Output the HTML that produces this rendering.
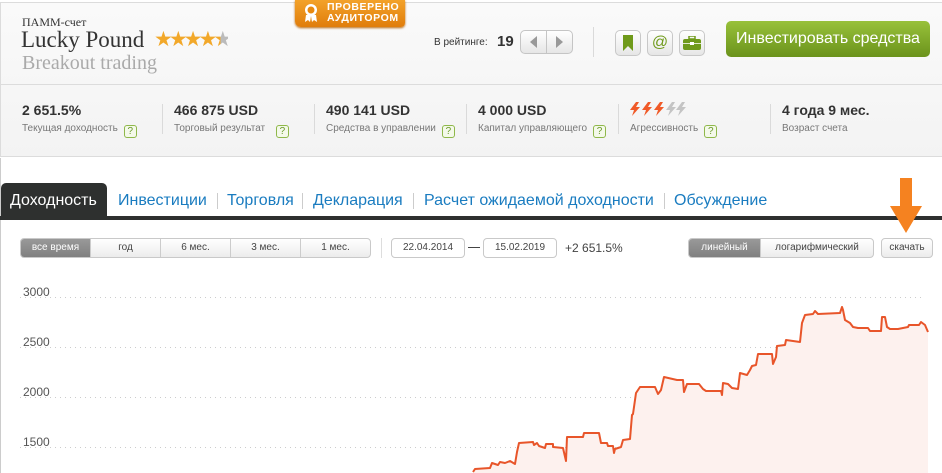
<!DOCTYPE html>
<html><head><meta charset="utf-8"><style>
*{margin:0;padding:0;box-sizing:border-box}
body{width:942px;height:473px;overflow:hidden;background:#fff;font-family:"Liberation Sans",Arial,sans-serif;position:relative;color:#333}
.abs{position:absolute}
.panel{left:0;top:2px;width:942px;height:155px;background:linear-gradient(#fafafa,#f3f3f3);border:1px solid #dcdcdc;border-right:none}
.hdiv{left:1px;top:84px;width:941px;height:1px;background:#dcdcdc}
.serif{font-family:"Liberation Serif",serif}
.stat b{font-size:14px;color:#333;display:block}
.stat span{font-size:10px;color:#777}
.q{display:inline-block;width:13px;height:13px;border:1px solid #8fb84a;border-radius:3px;color:#6a9a2a;font-size:10px;line-height:11px;text-align:center;font-style:normal;margin-left:6px;vertical-align:-3px;background:#f4f9ea}
.vs{width:1px;height:30px;background:#dadada;top:104px}
.ib{width:26px;height:26px;top:30px;border:1px solid #c8c8c8;border-radius:5px;background:linear-gradient(#fff,#e6e6e6)}
.tab{top:192px;font-size:16px;color:#1a7cc0}
.sep{top:193px;width:1px;height:16px;background:#ccc}
.seg{top:238px;height:20px;border:1px solid #c9c9c9;border-radius:4px;background:linear-gradient(#fff,#ececec);font-size:10px;color:#444;display:flex;overflow:hidden}
.seg div{text-align:center;line-height:18px;border-right:1px solid #ccc}
.seg div:last-child{border-right:none}
.seg .on{background:linear-gradient(#999,#808080);color:#fff}
.inp{top:238px;height:20px;border:1px solid #c9c9c9;border-radius:4px;font-size:10px;line-height:18px;text-align:center;color:#444;background:#fff}
.yl{font-size:12px;color:#555;left:23px}
</style></head><body>
<div class="abs panel"></div>
<div class="abs hdiv"></div>
<div class="abs" style="left:0;top:158px;width:1px;height:315px;background:#ccc"></div>
<div class="abs" style="left:295px;top:0;width:110px;height:27px;background:linear-gradient(#f3a22a,#e07d0b);border-radius:0 0 4px 6px;box-shadow:0 1px 2px #b96a10"></div>
<svg class="abs" style="left:303px;top:3px" width="16" height="20" viewBox="0 0 16 20"><circle cx="8" cy="7" r="6" fill="#fff"/><circle cx="8" cy="7" r="3.5" fill="#e8890f"/><path d="M3 12 L2 19 L5 17 L7 19 L8 13 L9 19 L11 17 L14 19 L13 12Z" fill="#fff"/></svg>
<div class="abs" style="left:327px;top:2px;font-size:10.5px;line-height:11px;font-weight:bold;color:#fff;letter-spacing:0.6px">ПРОВЕРЕНО<br>АУДИТОРОМ</div>
<div class="abs serif" style="left:22px;top:15px;font-size:12px;color:#333">ПАММ-счет</div>
<div class="abs serif" style="left:21px;top:27px;font-size:23px;color:#333">Lucky Pound</div>
<div class="abs" style="left:154px;top:27px;font-size:21px;letter-spacing:-4px;color:#f2a82a">★★★★<span style="background:linear-gradient(90deg,#f2a82a 50%,#bbb 50%);-webkit-background-clip:text;color:transparent">★</span></div>
<div class="abs serif" style="left:22px;top:52px;font-size:20px;color:#aaa">Breakout trading</div>
<div class="abs" style="left:434px;top:37px;font-size:10px;color:#333">В рейтинге:</div>
<div class="abs" style="left:497px;top:33px;font-size:15px;font-weight:bold;color:#333">19</div>
<div class="abs" style="left:520px;top:30px;width:53px;height:24px;border:1px solid #c5c5c5;border-radius:5px;background:linear-gradient(#fff,#e6e6e6)"></div>
<div class="abs" style="left:546px;top:31px;width:1px;height:22px;background:#c5c5c5"></div>
<div class="abs" style="left:530px;top:36px;width:0;height:0;border:6px solid transparent;border-right:7px solid #999;border-left:none"></div>
<div class="abs" style="left:556px;top:36px;width:0;height:0;border:6px solid transparent;border-left:7px solid #999;border-right:none"></div>
<div class="abs" style="left:593px;top:27px;width:1px;height:30px;background:#dadada"></div>
<div class="abs ib" style="left:615px"></div>
<svg class="abs" style="left:622px;top:35px" width="12" height="17"><path d="M1 0H11V16L6 11L1 16Z" fill="#6f9a1a"/></svg>
<div class="abs ib" style="left:647px;font-size:16px;color:#6f9a1a;text-align:center;line-height:23px">@</div>
<div class="abs ib" style="left:679px"></div>
<svg class="abs" style="left:683px;top:36px" width="18" height="14"><rect x="6" y="0" width="6" height="3" fill="none" stroke="#6f9a1a" stroke-width="1.5"/><rect x="0" y="3" width="18" height="11" rx="2" fill="#6f9a1a"/><rect x="0" y="7" width="18" height="1" fill="#dfe9c8"/><rect x="7" y="6" width="4" height="3" fill="#fff"/></svg>
<div class="abs" style="left:726px;top:21px;width:204px;height:36px;border-radius:5px;background:linear-gradient(#98c13a,#6b931c);color:#fff;font-size:16px;text-align:center;line-height:36px">Инвестировать средства</div>
<div class="abs stat" style="left:22px;top:102px"><b>2 651.5%</b><span>Текущая доходность<i class="q">?</i></span></div>
<div class="abs vs" style="left:162px"></div>
<div class="abs stat" style="left:174px;top:102px"><b>466 875 USD</b><span>Торговый результат <i class="q" style="margin-left:8px">?</i></span></div>
<div class="abs vs" style="left:314px"></div>
<div class="abs stat" style="left:326px;top:102px"><b>490 141 USD</b><span>Средства в управлении<i class="q">?</i></span></div>
<div class="abs vs" style="left:466px"></div>
<div class="abs stat" style="left:478px;top:102px"><b>4 000 USD</b><span>Капитал управляющего<i class="q">?</i></span></div>
<div class="abs vs" style="left:618px"></div>
<svg class="abs" style="left:630px;top:102px" width="60" height="14"><g fill="#f05a28"><path d="M6 0L0 8H4L2 14L10 5H6L9 0Z"/><path d="M18 0L12 8H16L14 14L22 5H18L21 0Z"/><path d="M30 0L24 8H28L26 14L34 5H30L33 0Z"/></g><g fill="#c4c4c4"><path d="M42 0L36 8H40L38 14L46 5H42L45 0Z"/><path d="M52 0L46 8H50L48 14L56 5H52L55 0Z"/></g></svg>
<div class="abs stat" style="left:630px;top:102px"><b>&nbsp;</b><span>Агрессивность<i class="q">?</i></span></div>
<div class="abs vs" style="left:770px"></div>
<div class="abs stat" style="left:782px;top:102px"><b>4 года 9 мес.</b><span>Возраст счета</span></div>
<div class="abs" style="left:1px;top:183px;width:106px;height:36px;background:#2e302f;border-radius:5px 5px 0 0"></div>
<div class="abs" style="left:10px;top:192px;font-size:16px;color:#fff">Доходность</div>
<div class="abs" style="left:0;top:216px;width:942px;height:4px;background:#2e302f"></div>
<div class="abs tab" style="left:118px">Инвестиции</div>
<div class="abs sep" style="left:217px"></div>
<div class="abs tab" style="left:227px">Торговля</div>
<div class="abs sep" style="left:302px"></div>
<div class="abs tab" style="left:313px">Декларация</div>
<div class="abs sep" style="left:413px"></div>
<div class="abs tab" style="left:424px">Расчет ожидаемой доходности</div>
<div class="abs sep" style="left:664px"></div>
<div class="abs tab" style="left:674px">Обсуждение</div>
<svg class="abs" style="left:888px;top:178px" width="36" height="56"><rect x="12" y="0" width="12" height="30" fill="#f58220"/><path d="M2 28H34L18 55Z" fill="#f58220"/></svg>
<div class="abs seg" style="left:20px;width:351px"><div class="on" style="width:70px">все время</div><div style="width:70px">год</div><div style="width:70px">6 мес.</div><div style="width:70px">3 мес.</div><div style="width:69px">1 мес.</div></div>
<div class="abs" style="left:381px;top:238px;width:1px;height:20px;background:#ddd"></div>
<div class="abs inp" style="left:391px;width:74px">22.04.2014</div>
<div class="abs" style="left:468px;top:247px;width:12px;height:1px;background:#444"></div>
<div class="abs inp" style="left:483px;width:74px">15.02.2019</div>
<div class="abs" style="left:565px;top:241px;font-size:12px;color:#444">+2 651.5%</div>
<div class="abs seg" style="left:688px;width:186px"><div class="on" style="width:72px">линейный</div><div style="width:112px">логарифмический</div></div>
<div class="abs seg" style="left:881px;width:52px"><div style="width:50px">скачать</div></div>
<svg class="abs" style="left:0;top:0" width="942" height="473">
<g stroke="#ccc" stroke-dasharray="1,4" stroke-width="1"><line x1="20" y1="297.5" x2="925" y2="297.5"/><line x1="20" y1="347.5" x2="925" y2="347.5"/><line x1="20" y1="397.5" x2="925" y2="397.5"/><line x1="20" y1="447.5" x2="925" y2="447.5"/></g>
<path d="M473 473L473 472 475 469 490 468 492 463 498 465 500 462 505 463 510 461 515 464 517 452 519 443 533 442 534 445 537 443 539 446 545 448 546 444 553 444 553 447 563 448 566 461 567 437 583 437 584 433 599 433 601 443 607 443 608 446 613 446 614 453 615 449 621 447 623 440 630 439 632 415 633 414 636 393 640 387 655 387 658 394 661 390 664 377 677 380 683 380 684 392 687 384 699 384 703 389 706 391 721 391 722 395 723 383 728 384 732 388 738 389 740 373 747 375 750 370 752 366 756 365 758 354 772 354 773 364 776 357 777 346 785 345 786 340 800 342 802 323 805 315 813 314 815 311 818 314 840 313 842 307 843 310 845 320 850 323 853 327 858 328 868 328 870 331 881 331 882 317 885 317 887 327 890 329 898 329 908 327 909 325 919 325 921 322 925 325 928 332 928 473Z" fill="#fdf1ee"/>
<path d="M473 472 475 469 490 468 492 463 498 465 500 462 505 463 510 461 515 464 517 452 519 443 533 442 534 445 537 443 539 446 545 448 546 444 553 444 553 447 563 448 566 461 567 437 583 437 584 433 599 433 601 443 607 443 608 446 613 446 614 453 615 449 621 447 623 440 630 439 632 415 633 414 636 393 640 387 655 387 658 394 661 390 664 377 677 380 683 380 684 392 687 384 699 384 703 389 706 391 721 391 722 395 723 383 728 384 732 388 738 389 740 373 747 375 750 370 752 366 756 365 758 354 772 354 773 364 776 357 777 346 785 345 786 340 800 342 802 323 805 315 813 314 815 311 818 314 840 313 842 307 843 310 845 320 850 323 853 327 858 328 868 328 870 331 881 331 882 317 885 317 887 327 890 329 898 329 908 327 909 325 919 325 921 322 925 325 928 332" fill="none" stroke="#e8552a" stroke-width="2" stroke-linejoin="round"/>
</svg>
<div class="abs yl" style="top:285px">3000</div>
<div class="abs yl" style="top:335px">2500</div>
<div class="abs yl" style="top:385px">2000</div>
<div class="abs yl" style="top:435px">1500</div>
</body></html>
